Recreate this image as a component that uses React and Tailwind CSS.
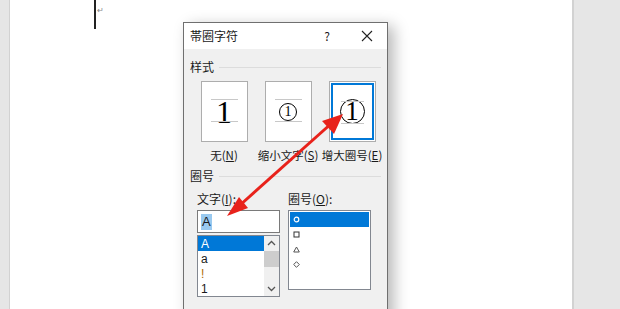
import React from 'react';

const font = { fontFamily: '"Noto Sans CJK SC", "Noto Sans", sans-serif' };
const serif = { fontFamily: '"Liberation Serif", serif' };
const latin = { fontFamily: '"Liberation Sans", Arial, sans-serif' };

function Preview({ selected, children, label }) {
  return (
    <div className="w-[64px] flex flex-col items-center">
      <div className="w-[47px] h-[61px] bg-white border border-[#adadad] p-px">
        <div
          className={
            'relative w-full h-full flex items-center justify-center ' +
            (selected ? 'border-2 border-[#0078d7]' : '')
          }
        >
          <div className="absolute left-[8px] right-[8px] top-[16px] h-px bg-[#c8c8c8]" />
          <div className="absolute left-[8px] right-[8px] top-[38px] h-px bg-[#c8c8c8]" />
          {children}
        </div>
      </div>
      <div className="mt-[5px] text-[11.5px] leading-[16px] text-[#1a1a1a] whitespace-nowrap">{label}</div>
    </div>
  );
}

function SectionTitle({ children }) {
  return (
    <div className="flex items-center gap-[5px] text-[12px] leading-[16px] text-[#1a1a1a]">
      <span>{children}</span>
      <div className="flex-1 h-px bg-[#dcdcdc] mr-[6px]" />
    </div>
  );
}

function Row({ active, children, className = '' }) {
  return (
    <div className={'h-[15px] leading-[14px] flex items-center px-[3px] ' + (active ? 'bg-[#0078d7] text-white ' : '') + className}>
      {children}
    </div>
  );
}

export default function App() {
  return (
    <div className="relative w-[620px] h-[309px] flex overflow-hidden bg-white" style={font}>
      <div className="w-[10px] bg-[#e6e6e6] border-r border-[#d2d2d2]" />
      <div className="relative flex-1 bg-white">
        <div className="absolute left-[84px] top-0 w-[2px] h-[29px] bg-[#222]" />
        <div className="absolute left-[87px] top-[6px] text-[8px] leading-[8px] text-[#888]">↵</div>
      </div>
      <div className="w-[48px] bg-[#e6e6e6] border-l-2 border-[#d2d2d2]" />

      {/* dialog */}
      <div className="absolute left-[183px] top-[22px] w-[205px] h-[300px] border border-[#6f6f6f] bg-[#f0f0f0] shadow-[6px_4px_14px_rgba(0,0,0,0.28)] flex flex-col">
        <div className="h-[26px] bg-white flex items-center pl-[6px] text-[12px] text-[#1a1a1a]">
          <span className="flex-1">帯圈字符</span>
          <span className="w-[12px] text-center mr-[28px]">?</span>
          <svg width="12" height="12" viewBox="0 0 12 12" className="mr-[14px]">
            <path d="M1 1 L11 11 M11 1 L1 11" stroke="#222" strokeWidth="1.1" />
          </svg>
        </div>
        <div className="flex flex-col pl-[6px] pt-[10px]">
          <SectionTitle>样式</SectionTitle>
          <div className="flex pl-[2px] mt-[6px]">
            <Preview label={<>无(<u>N</u>)</>}>
              <span className="text-[32px] leading-none text-black" style={serif}>1</span>
            </Preview>
            <Preview label={<>缩小文字(<u>S</u>)</>}>
              <div className="w-[18px] h-[18px] rounded-full border border-black flex items-center justify-center">
                <span className="text-[14px] leading-none text-black" style={serif}>1</span>
              </div>
            </Preview>
            <Preview selected label={<>增大圈号(<u>E</u>)</>}>
              <div className="w-[25px] h-[25px] rounded-full border border-black flex items-center justify-center">
                <span className="text-[27px] leading-none text-black" style={serif}>1</span>
              </div>
            </Preview>
          </div>
          <div className="mt-[5px]">
            <SectionTitle>圈号</SectionTitle>
          </div>
          <div className="flex gap-[8px] pl-[7px] mt-[7px] text-[12px] text-[#1a1a1a]">
            <div className="flex flex-col w-[83px]">
              <div className="leading-[16px]">文字(<u>I</u>):</div>
              <div className="mt-[3px] h-[23px] bg-white border border-[#7a7a7a] flex items-center px-[3px]">
                <span className="bg-[#99c9ef] px-px text-[13px] leading-[16px]" style={latin}>A</span>
              </div>
              <div className="mt-[2px] h-[62px] bg-white border border-[#828790] flex overflow-hidden">
                <div className="flex-1 flex flex-col text-[12px]" style={latin}>
                  <Row active>A</Row>
                  <Row>a</Row>
                  <Row className="text-[#b06a00]">!</Row>
                  <Row>1</Row>
                </div>
                <div className="w-[15px] flex flex-col items-center bg-[#f0f0f0]">
                  <svg width="9" height="15" viewBox="0 0 9 15"><path d="M1 9 L4.5 5.5 L8 9" stroke="#555" strokeWidth="1.3" fill="none" /></svg>
                  <div className="w-full h-[16px] bg-[#cdcdcd]" />
                  <div className="flex-1" />
                  <svg width="9" height="15" viewBox="0 0 9 15"><path d="M1 6 L4.5 9.5 L8 6" stroke="#555" strokeWidth="1.3" fill="none" /></svg>
                </div>
              </div>
            </div>
            <div className="flex flex-col w-[83px]">
              <div className="leading-[16px]">圈号(<u>O</u>):</div>
              <div className="mt-[3px] h-[80px] bg-white border border-[#828790] p-px flex flex-col">
                <Row active>
                  <svg width="7" height="7" viewBox="0 0 7 7"><circle cx="3.5" cy="3.5" r="2.3" stroke="white" strokeWidth="1.2" fill="none" /></svg>
                </Row>
                <Row>
                  <svg width="7" height="7" viewBox="0 0 7 7"><rect x="1" y="1" width="5" height="5" stroke="#333" strokeWidth="1" fill="none" /></svg>
                </Row>
                <Row>
                  <svg width="7" height="7" viewBox="0 0 7 7"><path d="M3.5 1 L6.3 6 L0.7 6 Z" stroke="#555" strokeWidth="1" fill="none" /></svg>
                </Row>
                <Row>
                  <svg width="7" height="7" viewBox="0 0 7 7"><path d="M3.5 0.7 L6.3 3.5 L3.5 6.3 L0.7 3.5 Z" stroke="#555" strokeWidth="1" fill="none" /></svg>
                </Row>
              </div>
            </div>
          </div>
        </div>
      </div>

      {/* red double arrow */}
      <svg className="absolute left-0 top-0 pointer-events-none" width="620" height="309">
        <line x1="239" y1="206" x2="333" y2="122" stroke="#e8221b" strokeWidth="3" />
        <polygon points="343,114 322,121 334,134" fill="#e8221b" />
        <polygon points="227,216 239,197 248,208" fill="#e8221b" />
      </svg>
    </div>
  );
}
